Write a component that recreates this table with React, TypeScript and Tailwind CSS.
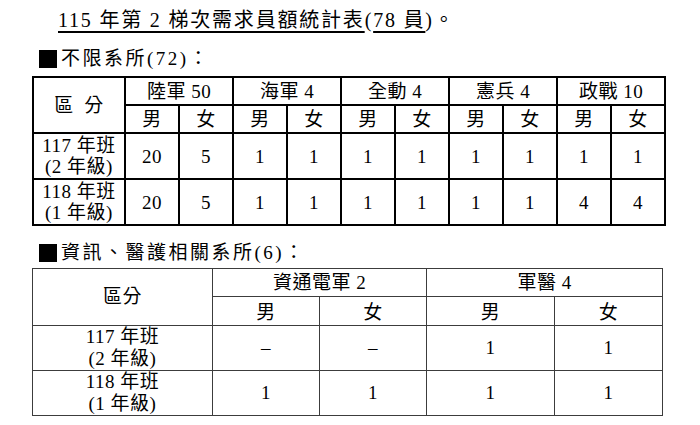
const serif = "font-['Liberation_Serif','Noto_Sans_CJK_TC',serif]";

const branches1 = ["陸軍 50", "海軍 4", "全動 4", "憲兵 4", "政戰 10"];

const rows1 = [
  { label: ["117 年班", "(2 年級)"], values: ["20", "5", "1", "1", "1", "1", "1", "1", "1", "1"] },
  { label: ["118 年班", "(1 年級)"], values: ["20", "5", "1", "1", "1", "1", "1", "1", "4", "4"] },
];

const rows2 = [
  { label: ["117 年班", "(2 年級)"], values: ["–", "–", "1", "1"] },
  { label: ["118 年班", "(1 年級)"], values: ["1", "1", "1", "1"] },
];

function Heading({ text }: { text: string }) {
  return (
    <div className="ml-[39px] flex h-[20px] items-center gap-[4px]">
      <div className="h-[18px] w-[18px] bg-black" />
      <span className="text-[19px] leading-[20px] tracking-[2.5px]">{text}</span>
    </div>
  );
}

const c1 = "border-2 border-black p-0 text-center align-middle";
const c2 = "border-[1.5px] border-[#3c3c3c] p-0 text-center align-middle";

export default function App() {
  return (
    <div className={`h-[425px] w-[700px] overflow-hidden bg-white pt-[8px] text-black ${serif}`}>
      <h1 className="ml-[58px] text-[20px] leading-[24px] tracking-[1.8px]">
        <span className="underline decoration-[1.5px] underline-offset-[4px]">115 年第 2 梯次需求員額統計表</span>
        (<span className="underline decoration-[1.5px] underline-offset-[4px]">78 員</span>)。
      </h1>

      <div className="mt-[17px]">
        <Heading text="不限系所(72)：" />
      </div>

      <table className="mt-[7px] ml-[32px] w-[631px] table-fixed border-collapse text-[19px] leading-[21px] tracking-[0.5px]">
        <colgroup>
          <col className="w-[92px]" />
          {Array.from({ length: 10 }).map((_, i) => (
            <col key={i} className="w-[54px]" />
          ))}
        </colgroup>
        <tbody>
          <tr className="h-[28px]">
            <td rowSpan={2} className={c1}>
              區&nbsp;&nbsp;分
            </td>
            {branches1.map((b) => (
              <td key={b} colSpan={2} className={c1}>
                {b}
              </td>
            ))}
          </tr>
          <tr className="h-[28px]">
            {branches1.map((b) => [
              <td key={b + "m"} className={c1}>
                男
              </td>,
              <td key={b + "f"} className={c1}>
                女
              </td>,
            ])}
          </tr>
          {rows1.map((row) => (
            <tr key={row.label[0]} className="h-[46px]">
              <td className={c1}>
                {row.label[0]}
                <br />
                {row.label[1]}
              </td>
              {row.values.map((v, i) => (
                <td key={i} className={c1}>
                  {v}
                </td>
              ))}
            </tr>
          ))}
        </tbody>
      </table>

      <div className="mt-[17px]">
        <Heading text="資訊、醫護相關系所(6)：" />
      </div>

      <table className="mt-[5px] ml-[32px] w-[630px] table-fixed border-collapse text-[19px] leading-[22px] tracking-[0.5px]">
        <colgroup>
          <col className="w-[180px]" />
          <col className="w-[107px]" />
          <col className="w-[107px]" />
          <col className="w-[128px]" />
          <col className="w-[108px]" />
        </colgroup>
        <tbody>
          <tr className="h-[28px]">
            <td rowSpan={2} className={c2}>
              區分
            </td>
            <td colSpan={2} className={c2}>
              資通電軍 2
            </td>
            <td colSpan={2} className={c2}>
              軍醫 4
            </td>
          </tr>
          <tr className="h-[29px]">
            <td className={`${c2} pt-[3px]`}>男</td>
            <td className={`${c2} pt-[3px]`}>女</td>
            <td className={`${c2} pt-[3px]`}>男</td>
            <td className={`${c2} pt-[3px]`}>女</td>
          </tr>
          {rows2.map((row) => (
            <tr key={row.label[0]} className="h-[45px]">
              <td className={c2}>
                {row.label[0]}
                <br />
                {row.label[1]}
              </td>
              {row.values.map((v, i) => (
                <td key={i} className={c2}>
                  {v}
                </td>
              ))}
            </tr>
          ))}
        </tbody>
      </table>
    </div>
  );
}
